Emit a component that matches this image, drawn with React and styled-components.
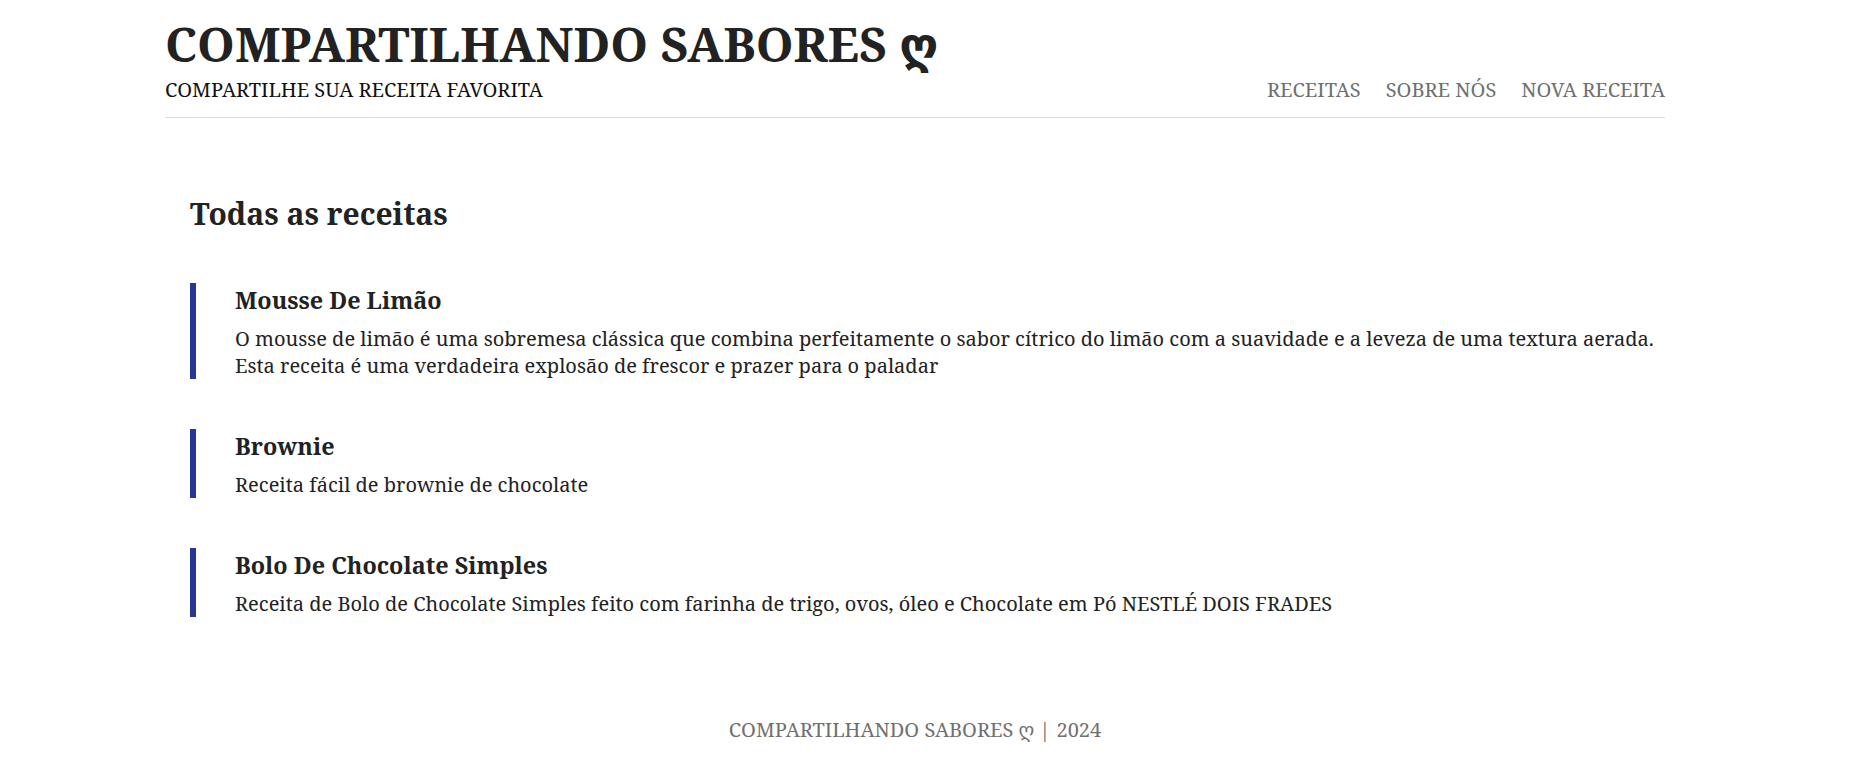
import React from "react";
import styled, { createGlobalStyle } from "styled-components";

const GlobalStyle = createGlobalStyle`
  html, body {
    margin: 0;
    padding: 0;
    background: #fff;
  }
  body {
    font-family: "Noto Serif", "DejaVu Serif", serif;
    color: #222;
  }
`;

const recipes = [
  {
    title: "Mousse De Limão",
    text: "O mousse de limão é uma sobremesa clássica que combina perfeitamente o sabor cítrico do limão com a suavidade e a leveza de uma textura aerada. Esta receita é uma verdadeira explosão de frescor e prazer para o paladar",
  },
  {
    title: "Brownie",
    text: "Receita fácil de brownie de chocolate",
  },
  {
    title: "Bolo De Chocolate Simples",
    text: "Receita de Bolo de Chocolate Simples feito com farinha de trigo, ovos, óleo e Chocolate em Pó NESTLÉ DOIS FRADES",
  },
];

const App = () => {
  return (
    <>
      <GlobalStyle />
      <Container>
        <Header>
          <Brand>
            <Title>
              COMPARTILHANDO SABORES <Heart>ღ</Heart>
            </Title>
            <Subtitle>COMPARTILHE SUA RECEITA FAVORITA</Subtitle>
          </Brand>
          <Nav>
            <NavLink>RECEITAS</NavLink>
            <NavLink>SOBRE NÓS</NavLink>
            <NavLink>NOVA RECEITA</NavLink>
          </Nav>
        </Header>
        <Main>
          <PageTitle>Todas as receitas</PageTitle>
          <RecipeList>
            {recipes.map((r) => (
              <RecipeItem key={r.title}>
                <RecipeTitle>{r.title}</RecipeTitle>
                <RecipeText>{r.text}</RecipeText>
              </RecipeItem>
            ))}
          </RecipeList>
        </Main>
        <Footer>
          COMPARTILHANDO SABORES <Heart>ღ</Heart>
          <Separator>|</Separator>2024
        </Footer>
      </Container>
    </>
  );
};

const Container = styled.div`
  width: 1500px;
  margin-left: 165px;
  min-height: 759px;
  display: flex;
  flex-direction: column;
`;

const Header = styled.header`
  display: flex;
  justify-content: space-between;
  align-items: flex-end;
  padding-top: 14px;
  padding-bottom: 12px;
  border-bottom: 1px solid #ddd;
`;

const Brand = styled.div`
  display: flex;
  flex-direction: column;
`;

const Title = styled.h1`
  margin: 0;
  font-size: 48px;
  line-height: 60px;
  font-weight: 700;
  color: #222;
`;

const Heart = styled.span`
  font-family: "DejaVu Sans", sans-serif;
`;

const Subtitle = styled.p`
  margin: 0;
  font-size: 20px;
  line-height: 30px;
  color: #111;
`;

const Nav = styled.nav`
  display: flex;
  gap: 25px;
  line-height: 30px;
`;

const NavLink = styled.a`
  font-size: 20px;
  color: #707070;
  text-decoration: none;
  cursor: pointer;
`;

const Main = styled.main`
  padding: 77px 0 0 25px;
`;

const PageTitle = styled.h2`
  margin: 0;
  font-size: 30px;
  line-height: 37px;
  font-weight: 700;
`;

const RecipeList = styled.ul`
  list-style: none;
  margin: 51px 0 0;
  padding: 0;
  display: flex;
  flex-direction: column;
  gap: 50px;
`;

const RecipeItem = styled.li`
  border-left: 6px solid #283593;
  padding-left: 39px;
`;

const RecipeTitle = styled.h3`
  margin: 0 0 8px;
  font-size: 23.4px;
  line-height: 34px;
  font-weight: 700;
`;

const RecipeText = styled.p`
  margin: 0;
  font-size: 20px;
  line-height: 27px;
`;

const Footer = styled.footer`
  margin-top: 99px;
  text-align: center;
  font-size: 20px;
  line-height: 27px;
  color: #707070;
`;

const Separator = styled.span`
  margin: 0 6px 0 5px;
`;

export default App;
